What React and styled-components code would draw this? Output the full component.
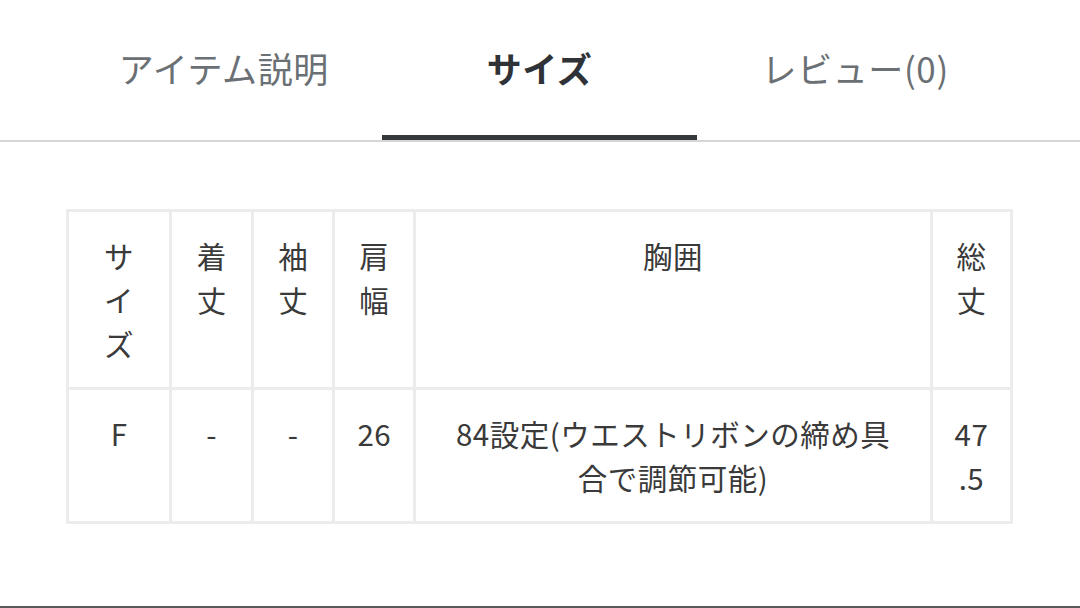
import React from 'react';
import styled, { createGlobalStyle, css } from 'styled-components';

const GlobalStyle = createGlobalStyle`
  html, body {
    margin: 0;
    padding: 0;
    background: #fff;
  }
  body {
    font-family: "Noto Sans CJK JP", "Noto Sans", sans-serif;
    color: #333;
  }
  * {
    box-sizing: border-box;
  }
`;

const TABS = ['アイテム説明', 'サイズ', 'レビュー(0)'];

// width = column width, pad = horizontal cell padding
const COLUMNS = [
  { label: 'サイズ', width: 103, pad: 21 },
  { label: '着丈', width: 82, pad: 21 },
  { label: '袖丈', width: 81, pad: 21 },
  { label: '肩幅', width: 81, pad: 21 },
  { label: '胸囲', width: 516, pad: 32 },
  { label: '総丈', width: 80, pad: 19 },
];
const ROWS = [['F', '-', '-', '26', '84設定(ウエストリボンの締め具合で調節可能)', '47.5']];

function App() {
  return (
    <>
      <GlobalStyle />
      <PageDiv>
        <TabBar>
          {TABS.map((label, i) => (
            <TabButton key={label} $active={i === 1}>
              {label}
            </TabButton>
          ))}
        </TabBar>
        <ContentDiv>
          <SizeTable>
            <colgroup>
              {COLUMNS.map((c) => (
                <col key={c.label} width={c.width} />
              ))}
            </colgroup>
            <thead>
              <tr>
                {COLUMNS.map((c) => (
                  <HeadCell key={c.label} $pad={c.pad}>
                    {c.label}
                  </HeadCell>
                ))}
              </tr>
            </thead>
            <tbody>
              {ROWS.map((row, r) => (
                <tr key={r}>
                  {row.map((v, i) => (
                    <BodyCell key={i} $pad={COLUMNS[i].pad}>
                      {v}
                    </BodyCell>
                  ))}
                </tr>
              ))}
            </tbody>
          </SizeTable>
        </ContentDiv>
        <FooterRule />
      </PageDiv>
    </>
  );
}

const PageDiv = styled.div`
  min-height: 608px;
  display: flex;
  flex-direction: column;
`;

const TabBar = styled.nav`
  display: flex;
  padding: 0 67px 0 66px;
  border-bottom: 2px solid #d6d6d6;
`;

const TabButton = styled.div`
  flex: 1;
  height: 140px;
  display: flex;
  align-items: center;
  justify-content: center;
  border-bottom: 5px solid ${({ $active }) => ($active ? '#35393e' : 'transparent')};
  font-size: 35px;
  font-weight: ${({ $active }) => ($active ? 700 : 400)};
  color: ${({ $active }) => ($active ? '#2f3236' : '#6b7074')};
  letter-spacing: 0.6px;
`;

const ContentDiv = styled.main`
  flex: 1;
  padding: 67px 67px 0 66px;
`;

const SizeTable = styled.table`
  width: 947px;
  border-collapse: collapse;
  table-layout: fixed;
`;

const cellStyle = css`
  border: 3px solid #ececec;
  padding: 21px ${({ $pad }) => $pad}px 22px;
  font-size: 29.5px;
  line-height: 44px;
  font-weight: 400;
  letter-spacing: 0.5px;
  color: #3a3a3a;
  text-align: center;
  vertical-align: top;
  word-break: break-all;
  line-break: anywhere;
`;

const HeadCell = styled.th`
  ${cellStyle}
`;

const BodyCell = styled.td`
  ${cellStyle}
`;

const FooterRule = styled.div`
  margin-top: auto;
  height: 2px;
  background: #595959;
`;

export default App;
